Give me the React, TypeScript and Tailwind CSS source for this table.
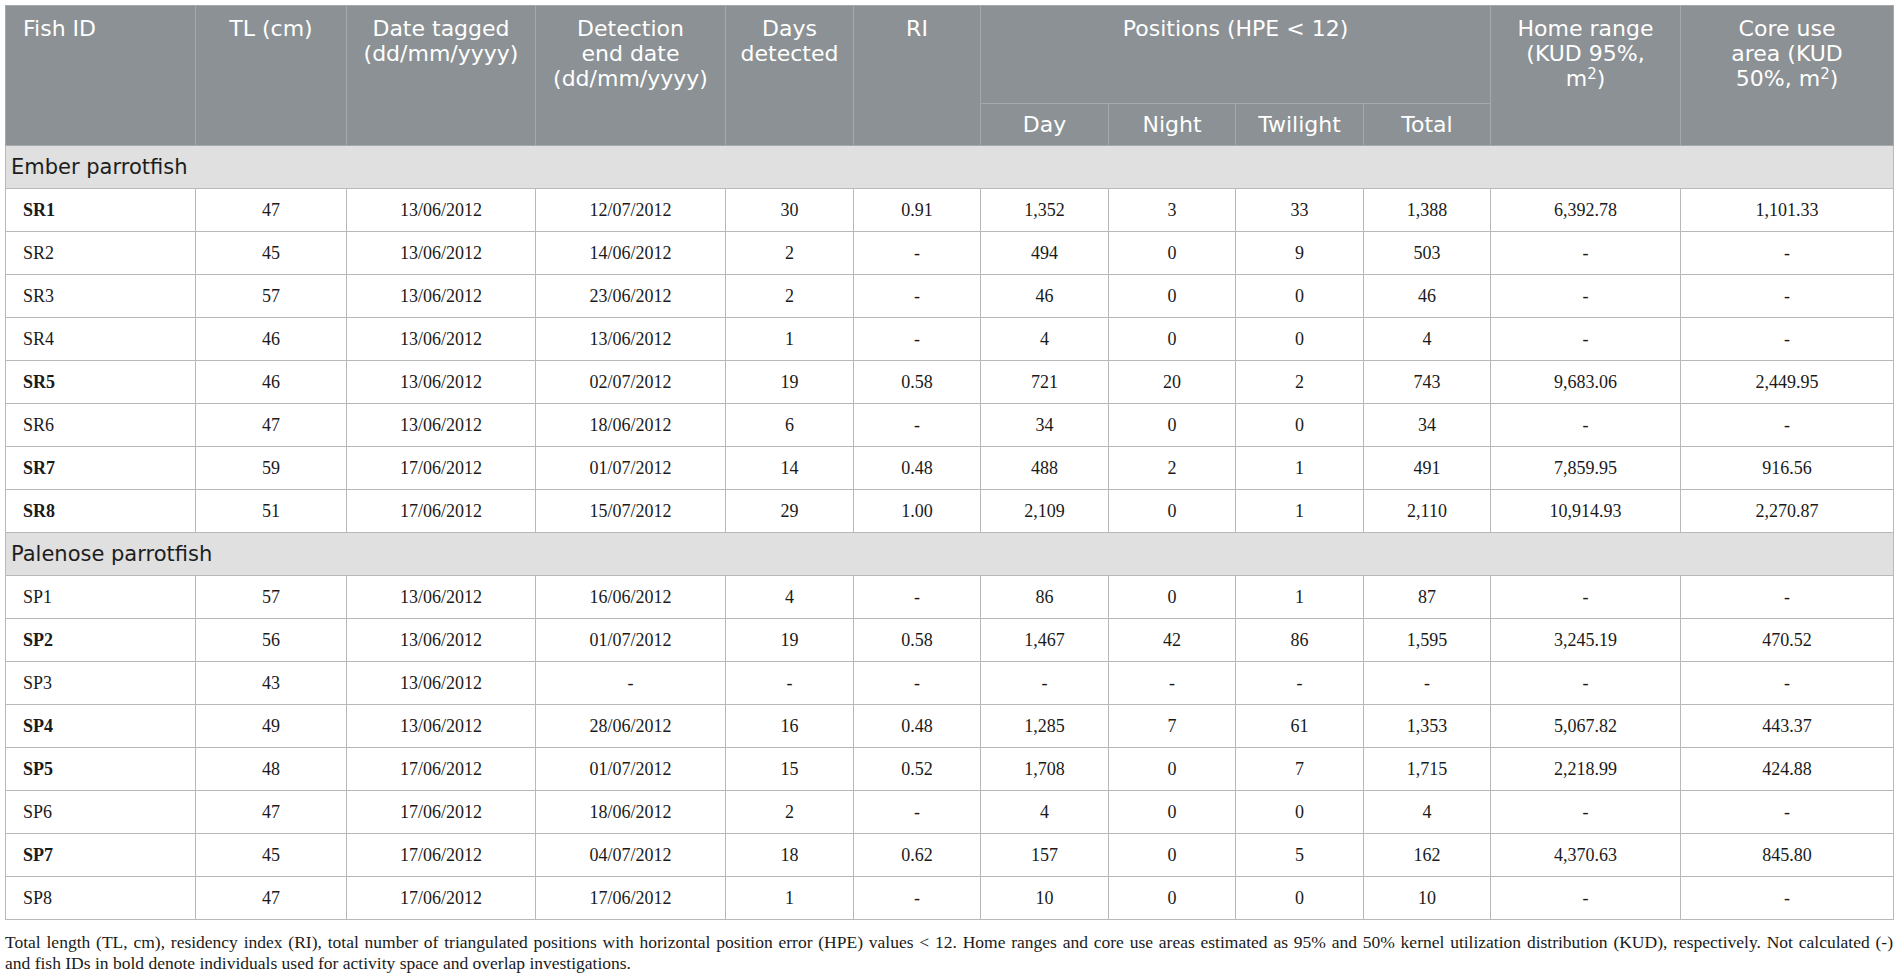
import React from "react";

type Row = {
  id: string;
  bold: boolean;
  v: string[];
};

const ember: Row[] = [
  { id: "SR1", bold: true, v: ["47", "13/06/2012", "12/07/2012", "30", "0.91", "1,352", "3", "33", "1,388", "6,392.78", "1,101.33"] },
  { id: "SR2", bold: false, v: ["45", "13/06/2012", "14/06/2012", "2", "-", "494", "0", "9", "503", "-", "-"] },
  { id: "SR3", bold: false, v: ["57", "13/06/2012", "23/06/2012", "2", "-", "46", "0", "0", "46", "-", "-"] },
  { id: "SR4", bold: false, v: ["46", "13/06/2012", "13/06/2012", "1", "-", "4", "0", "0", "4", "-", "-"] },
  { id: "SR5", bold: true, v: ["46", "13/06/2012", "02/07/2012", "19", "0.58", "721", "20", "2", "743", "9,683.06", "2,449.95"] },
  { id: "SR6", bold: false, v: ["47", "13/06/2012", "18/06/2012", "6", "-", "34", "0", "0", "34", "-", "-"] },
  { id: "SR7", bold: true, v: ["59", "17/06/2012", "01/07/2012", "14", "0.48", "488", "2", "1", "491", "7,859.95", "916.56"] },
  { id: "SR8", bold: true, v: ["51", "17/06/2012", "15/07/2012", "29", "1.00", "2,109", "0", "1", "2,110", "10,914.93", "2,270.87"] },
];

const palenose: Row[] = [
  { id: "SP1", bold: false, v: ["57", "13/06/2012", "16/06/2012", "4", "-", "86", "0", "1", "87", "-", "-"] },
  { id: "SP2", bold: true, v: ["56", "13/06/2012", "01/07/2012", "19", "0.58", "1,467", "42", "86", "1,595", "3,245.19", "470.52"] },
  { id: "SP3", bold: false, v: ["43", "13/06/2012", "-", "-", "-", "-", "-", "-", "-", "-", "-"] },
  { id: "SP4", bold: true, v: ["49", "13/06/2012", "28/06/2012", "16", "0.48", "1,285", "7", "61", "1,353", "5,067.82", "443.37"] },
  { id: "SP5", bold: true, v: ["48", "17/06/2012", "01/07/2012", "15", "0.52", "1,708", "0", "7", "1,715", "2,218.99", "424.88"] },
  { id: "SP6", bold: false, v: ["47", "17/06/2012", "18/06/2012", "2", "-", "4", "0", "0", "4", "-", "-"] },
  { id: "SP7", bold: true, v: ["45", "17/06/2012", "04/07/2012", "18", "0.62", "157", "0", "5", "162", "4,370.63", "845.80"] },
  { id: "SP8", bold: false, v: ["47", "17/06/2012", "17/06/2012", "1", "-", "10", "0", "0", "10", "-", "-"] },
];

const widths = [190, 151, 189, 190, 128, 127, 128, 127, 128, 127, 190, 213];

const thBase =
  "bg-[#8b9194] text-white font-normal text-[22px] leading-[25px] border border-[#a4a9ac] align-top pt-[10px] px-[6px] text-center";

function Sup() {
  return <sup className="text-[15px]">2</sup>;
}

function Group({ name }: { name: string }) {
  return (
    <tr className="h-[43px]">
      <td
        colSpan={12}
        className="bg-[#dfe0df] border border-[#b9b9b9] text-left pl-[5px] text-[21px] leading-[24px] text-[#1d1d1d] font-['DejaVu_Sans',sans-serif] align-middle"
      >
        {name}
      </td>
    </tr>
  );
}

function DataRow({ r }: { r: Row }) {
  return (
    <tr className="h-[43px]">
      <td
        className={
          "border border-[#b8b8b8] text-left pl-[17px] text-[18px] text-[#1a1a1a] align-middle " +
          (r.bold ? "font-bold" : "font-normal")
        }
      >
        {r.id}
      </td>
      {r.v.map((x, i) => (
        <td key={i} className="border border-[#b8b8b8] text-center text-[18px] text-[#1a1a1a] align-middle">
          {x}
        </td>
      ))}
    </tr>
  );
}

export default function App() {
  return (
    <div className="w-[1900px] h-[977px] bg-white pl-[5px] pt-[5px] overflow-hidden font-['Liberation_Serif',serif]">
      <table className="table-fixed border-collapse w-[1888px] border-t border-[#d9d9d9]">
        <colgroup>
          {widths.map((w, i) => (
            <col key={i} style={{ width: w }} />
          ))}
        </colgroup>
        <thead className="font-['DejaVu_Sans',sans-serif]">
          <tr className="h-[98px]">
            <th rowSpan={2} className={thBase + " !text-left pl-[17px]"}>
              Fish ID
            </th>
            <th rowSpan={2} className={thBase}>
              TL (cm)
            </th>
            <th rowSpan={2} className={thBase}>
              Date tagged
              <br />
              (dd/mm/yyyy)
            </th>
            <th rowSpan={2} className={thBase}>
              Detection
              <br />
              end date
              <br />
              (dd/mm/yyyy)
            </th>
            <th rowSpan={2} className={thBase}>
              Days
              <br />
              detected
            </th>
            <th rowSpan={2} className={thBase}>
              RI
            </th>
            <th colSpan={4} className={thBase}>
              Positions (HPE &lt; 12)
            </th>
            <th rowSpan={2} className={thBase}>
              Home range
              <br />
              (KUD 95%,
              <br />
              m<Sup />)
            </th>
            <th rowSpan={2} className={thBase}>
              Core use
              <br />
              area (KUD
              <br />
              50%, m<Sup />)
            </th>
          </tr>
          <tr className="h-[42px]">
            {["Day", "Night", "Twilight", "Total"].map((t) => (
              <th key={t} className={thBase + " !align-middle !pt-0"}>
                {t}
              </th>
            ))}
          </tr>
        </thead>
        <tbody>
          <Group name="Ember parrotfish" />
          {ember.map((r) => (
            <DataRow key={r.id} r={r} />
          ))}
          <Group name="Palenose parrotfish" />
          {palenose.map((r) => (
            <DataRow key={r.id} r={r} />
          ))}
        </tbody>
      </table>
      <div className="w-[1888px] mt-[12px] text-[17.5px] leading-[21px] text-[#1a1a1a] font-['Liberation_Serif',serif]">
        <div className="text-justify [text-align-last:justify] whitespace-nowrap">
          Total length (TL, cm), residency index (RI), total number of triangulated positions with horizontal position error (HPE) values &lt; 12. Home ranges and core use areas estimated as 95% and 50% kernel utilization distribution (KUD), respectively. Not calculated (-)
        </div>
        <div>and fish IDs in bold denote individuals used for activity space and overlap investigations.</div>
      </div>
    </div>
  );
}
